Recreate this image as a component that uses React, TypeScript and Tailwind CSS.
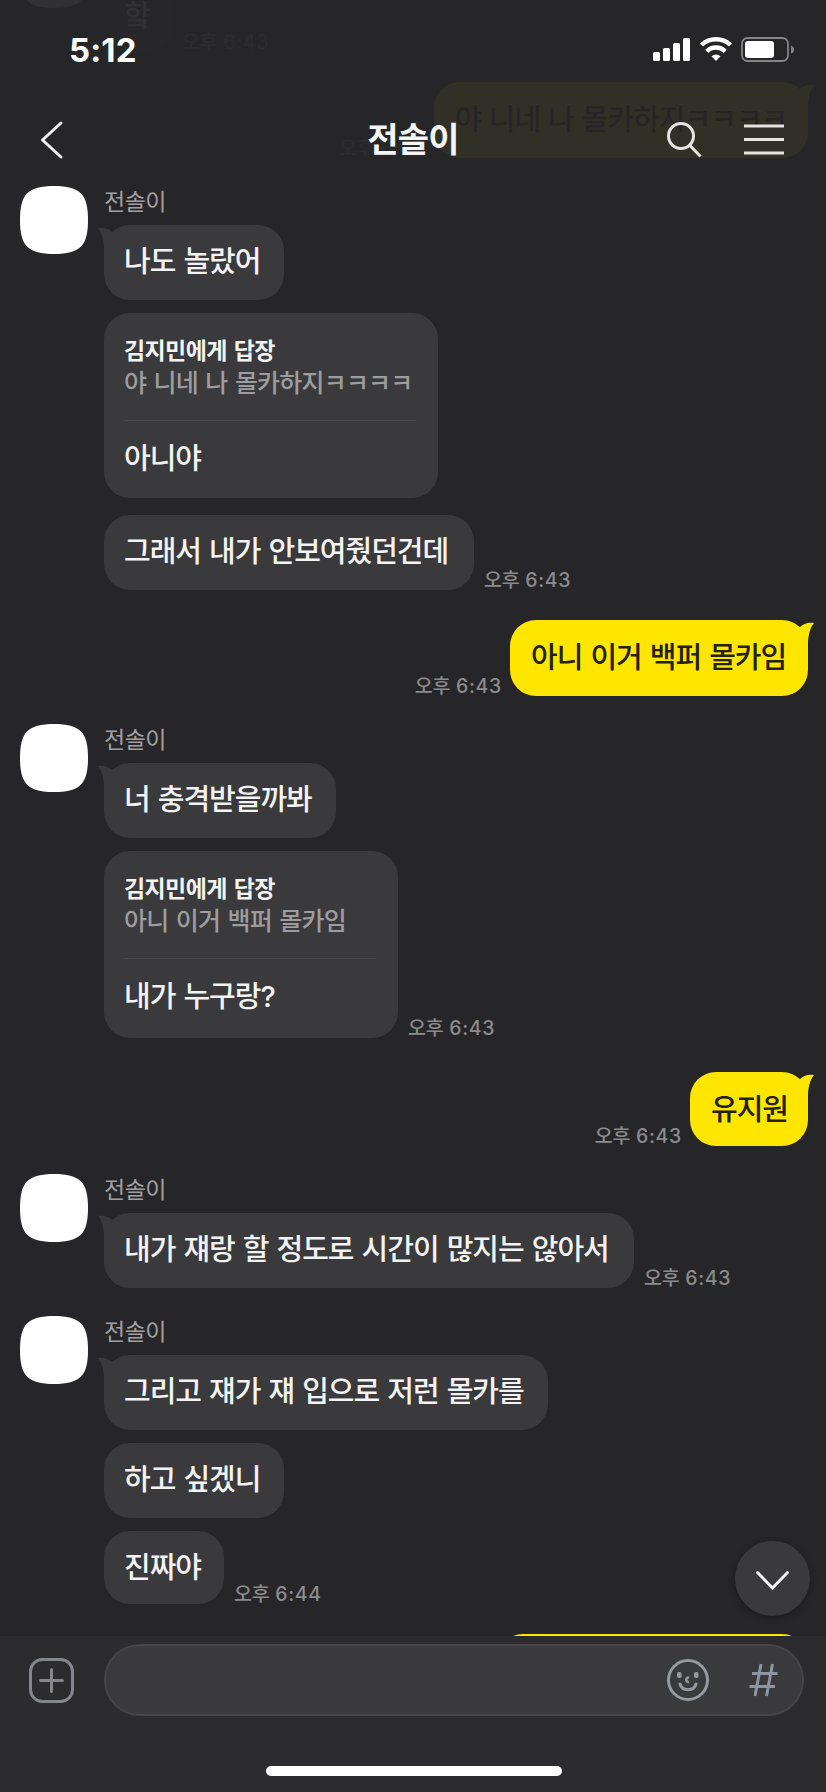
import type { ReactNode } from "react";
import clsx from "clsx";

type Reply = { to: string; quote: string };

type Message = {
  text: string;
  width: string;
  height?: string;
  reply?: Reply;
  time?: string;
};

type Block = { mine?: boolean; messages: Message[] };

const blocks: Block[] = [
  { messages: [{ text: "핰", width: "w-[68px]", height: "h-[73px]", time: "6:43" }] },
  { mine: true, messages: [{ text: "야 니네 나 몰카하지ㅋㅋㅋㅋ", width: "w-[374px]", height: "h-[76px]", time: "6:43" }] },
  {
    messages: [
      { text: "나도 놀랐어", width: "w-[180px]" },
      {
        text: "아니야",
        width: "w-[334px]",
        height: "h-[185px]",
        reply: { to: "김지민에게 답장", quote: "야 니네 나 몰카하지ㅋㅋㅋㅋ" },
      },
      { text: "그래서 내가 안보여줬던건데", width: "w-[370px]", time: "6:43" },
    ],
  },
  { mine: true, messages: [{ text: "아니 이거 백퍼 몰카임", width: "w-[298px]", height: "h-[76px]", time: "6:43" }] },
  {
    messages: [
      { text: "너 충격받을까봐", width: "w-[232px]" },
      {
        text: "내가 누구랑?",
        width: "w-[294px]",
        height: "h-[187px]",
        reply: { to: "김지민에게 답장", quote: "아니 이거 백퍼 몰카임" },
        time: "6:43",
      },
    ],
  },
  { mine: true, messages: [{ text: "유지원", width: "w-[118px]", height: "h-[74px]", time: "6:43" }] },
  { messages: [{ text: "내가 쟤랑 할 정도로 시간이 많지는 않아서", width: "w-[530px]", time: "6:43" }] },
  {
    messages: [
      { text: "그리고 쟤가 쟤 입으로 저런 몰카를", width: "w-[444px]" },
      { text: "하고 싶겠니", width: "w-[180px]" },
      { text: "진짜야", width: "w-[120px]", height: "h-[73px]", time: "6:44" },
    ],
  },
  { mine: true, messages: [{ text: "", width: "w-[311px]", height: "h-[76px]" }] },
];

function Avatar() {
  return (
    <svg width="68" height="68" viewBox="0 0 68 68" className="shrink-0">
      <path d="M0 34C0 8 8 0 34 0S68 8 68 34 60 68 34 68 0 60 0 34Z" fill="#fff" />
    </svg>
  );
}

function Time({ value }: { value: string }) {
  return (
    <span className="-mb-px text-[19.5px] leading-[22px] font-medium tracking-[0.7px] whitespace-nowrap text-[#8b8b8d]">
      <span className="tracking-[-0.3px]">오후</span> {value}
    </span>
  );
}

function Tail({ mine }: { mine?: boolean }) {
  return (
    <svg
      width="18"
      height="26"
      viewBox="0 0 18 26"
      className={clsx("absolute top-[2px]", mine ? "-right-[6px] -scale-x-100 text-[#ffe600]" : "-left-[6px] text-[#3a3a3c]")}
    >
      <path d="M0 1C6 0 11 2 14.5 5.5L18 14L6 26C6.500 14 4 6 0 1Z" fill="currentColor" />
    </svg>
  );
}

function Bubble({ message, mine, tail }: { message: Message; mine?: boolean; tail?: boolean }) {
  const { text, width, height = "h-[75px]", reply } = message;
  return (
    <div
      className={clsx(
        "relative rounded-[26px] whitespace-nowrap",
        width,
        height,
        mine ? "bg-[#ffe600] pl-[21px] text-[#24210c]" : "bg-[#3a3a3c] pl-[20px] text-[#f3f3f4]",
      )}
    >
      {tail && <Tail mine={mine} />}
      {reply && (
        <div className="mr-[22px] h-[108px] border-b border-[#48484a] pt-[21.5px]">
          <p className="text-[23px] leading-8 font-bold tracking-[-0.6px] [word-spacing:2px]">{reply.to}</p>
          <p className="text-[25px] leading-8 font-medium tracking-[-0.8px] text-[#9d9d9f] [word-spacing:1.5px]">{reply.quote}</p>
        </div>
      )}
      <p
        className={clsx(
          "text-[29px] leading-[40px] font-medium tracking-[-1px] [word-spacing:1.3px]",
          reply || !mine ? "pt-[17px]" : "pt-[18px]",
          reply && "mt-px",
        )}
      >
        {text}
      </p>
    </div>
  );
}

function Incoming({ messages }: { messages: Message[] }) {
  return (
    <div className="flex gap-4 pl-5">
      <Avatar />
      <div className="flex flex-col gap-[13px]">
        <p className="-mb-[13px] h-[39px] text-[23px] leading-[32px] tracking-[-0.5px] text-[#a0a0a2]">전솔이</p>
        {messages.map((m, i) => (
          <div key={i} className={clsx("flex items-end gap-[10px]", m.reply && "mb-1")}>
            <Bubble message={m} tail={i === 0} />
            {m.time && <Time value={m.time} />}
          </div>
        ))}
      </div>
    </div>
  );
}

function Outgoing({ messages }: { messages: Message[] }) {
  return (
    <div className="mt-[2px] flex items-end justify-end gap-[8px] pr-[18px]">
      {messages[0].time && <Time value={messages[0].time} />}
      <Bubble message={messages[0]} mine tail />
    </div>
  );
}

function StatusIcons() {
  return (
    <svg width="142" height="26" viewBox="0 0 142 26" fill="#fff">
      <rect x="0" y="15" width="7" height="9" rx="1.500" />
      <rect x="10" y="11" width="7" height="13" rx="1.500" />
      <rect x="20" y="6" width="7" height="18" rx="1.500" />
      <rect x="30" y="1" width="7" height="23" rx="1.500" />
      <g fill="none" stroke="#fff" strokeWidth="4.400">
        <path d="M48.500 8a21.300 21.300 0 0 1 29 0" />
        <path d="M53.800 14.300a13.200 13.200 0 0 1 18.400 0" />
      </g>
      <path d="M58.500 19.200q4.500-3.600 9 0L63 24Z" />
      <rect x="89" y="1" width="46" height="23" rx="5.500" fill="none" stroke="#858587" strokeWidth="1.800" />
      <rect x="92" y="4" width="29" height="17" rx="3" />
      <path d="M138 8.500q3 1 3 4t-3 4Z" fill="#858587" />
    </svg>
  );
}

function Header() {
  return (
    <header className="absolute inset-x-0 top-0 z-10 h-[168px] bg-[#262628]/95">
      <div className="flex h-[120px] items-start justify-between pt-[37px] pr-[31px] pl-[69px]">
        <span className="text-[33px] leading-[27px] font-bold tracking-[0.1px] text-white">5:12</span>
        <StatusIcons />
      </div>
      <div className="grid grid-cols-3 items-center px-10">
        <svg width="24" height="40" viewBox="0 0 24 40" fill="none" stroke="#eeeeef" strokeWidth="3" strokeLinecap="round" strokeLinejoin="round">
          <path d="M21 3L2.500 20L21 37" />
        </svg>
        <h1 className="text-center text-[34px] leading-[40px] font-bold tracking-[-0.8px] text-[#f4f4f5]">전솔이</h1>
        <div className="flex items-center justify-end gap-[42px] pr-[2px]">
          <svg width="38" height="40" viewBox="0 0 38 40" fill="none" stroke="#e4e4e2" strokeWidth="3">
            <circle cx="17" cy="16" r="12.500" />
            <path d="M25.500 25L36.500 36.500" />
          </svg>
          <svg width="40" height="40" viewBox="0 0 40 40" stroke="#e4e4e2" strokeWidth="3">
            <path d="M0 6H40M0 19.500H40M0 33H40" />
          </svg>
        </div>
      </div>
    </header>
  );
}

function IconButton({ label, children }: { label: string; children: ReactNode }) {
  return (
    <button aria-label={label} className="shrink-0">
      {children}
    </button>
  );
}

function InputBar() {
  return (
    <footer className="absolute inset-x-0 bottom-0 z-10 h-[156px] bg-[#2c2c2e]">
      <div className="flex items-center pt-2 pr-[22px] pl-[29px]">
        <IconButton label="추가">
          <svg width="45" height="45" viewBox="0 0 45 45" fill="none" stroke="#85868c" strokeWidth="3" strokeLinecap="round">
            <rect x="1.500" y="1.500" width="42" height="42" rx="12" />
            <path d="M11.500 22.500H33.500M22.500 11.500V33.500" />
          </svg>
        </IconButton>
        <div className="ml-[30px] flex h-[72px] flex-1 items-center justify-end gap-[40px] rounded-full border-2 border-[#454548] bg-[#3a3a3c] pr-[24px]">
          <IconButton label="이모티콘">
            <svg width="42" height="42" viewBox="0 0 42 42" fill="none" stroke="#95989f" strokeWidth="3">
              <circle cx="21" cy="21" r="19.500" />
              <rect x="10" y="13" width="4.500" height="6" rx="1.800" fill="#95989f" stroke="none" />
              <rect x="27" y="13" width="4.500" height="6" rx="1.800" fill="#95989f" stroke="none" />
              <path d="M22 18.500a2.300 2.300 0 1 0 0 4.500" strokeWidth="2.600" />
              <path d="M13 25c2 7.500 14 7.500 16 0" strokeLinecap="round" />
            </svg>
          </IconButton>
          <IconButton label="샵검색">
            <svg width="29" height="34" viewBox="0 0 29 34" stroke="#8d95a3" strokeWidth="3">
              <path d="M12 1L6 33M23.500 1L17.500 33M3 10.500H28.500M0.500 23.500H26" />
            </svg>
          </IconButton>
        </div>
      </div>
      <div className="mt-[50px] ml-[266px] h-[10px] w-[296px] rounded-full bg-white" />
    </footer>
  );
}

export default function App() {
  return (
    <div className="relative h-[1792px] w-[826px] overflow-hidden bg-[#262628] font-[Inter,'Noto_Sans_CJK_KR',sans-serif]">
      <Header />
      <main className="-mt-[60px] flex flex-col gap-7">
        {blocks.map((b, i) =>
          b.mine ? <Outgoing key={i} messages={b.messages} /> : <Incoming key={i} messages={b.messages} />,
        )}
      </main>
      <button
        aria-label="맨 아래로"
        className="absolute right-4 bottom-[176px] flex size-[75px] items-center justify-center rounded-full bg-[#3a3a3d] shadow-[0_2px_6px_rgba(0,0,0,0.3)]"
      >
        <svg width="35" height="22" viewBox="0 0 35 22" fill="none" stroke="#f2f2f3" strokeWidth="3" strokeLinecap="round">
          <path d="M2.500 4.500L17.500 20L32.500 4.500" />
        </svg>
      </button>
      <InputBar />
    </div>
  );
}
